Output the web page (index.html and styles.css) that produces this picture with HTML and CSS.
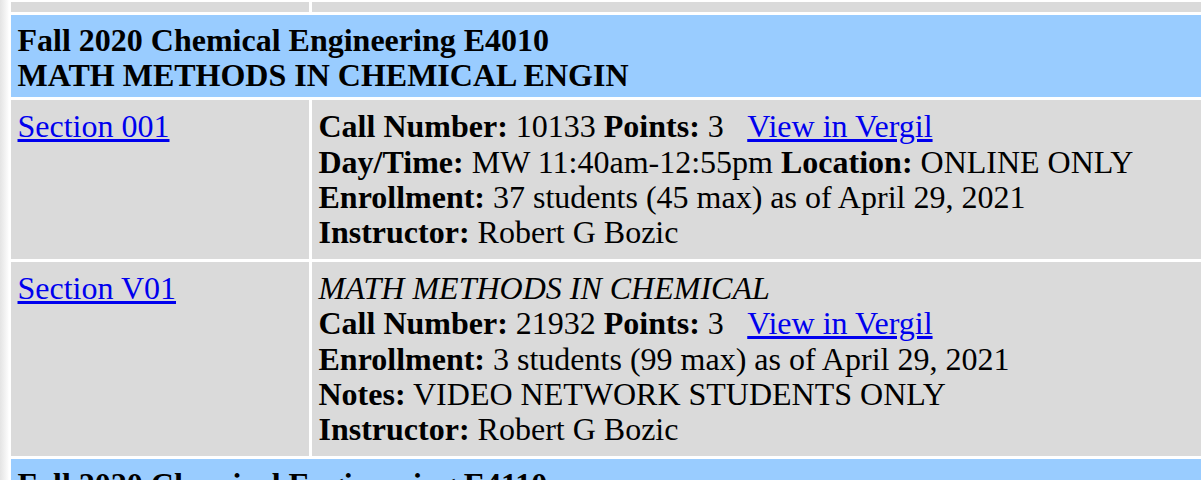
FILE: index.html
```html
<!DOCTYPE html>
<html>
<head>
<meta charset="utf-8">
<link rel="stylesheet" href="styles.css">
</head>
<body>
<table class="courses">
  <colgroup><col class="col-sec"><col class="col-info"></colgroup>
  <tr class="stub"><td></td><td></td></tr>
  <tr>
    <td colspan="2" class="head"><b>Fall 2020 Chemical Engineering E4010<br>MATH METHODS IN CHEMICAL ENGIN</b></td>
  </tr>
  <tr>
    <td class="sec"><a href="#">Section 001</a></td>
    <td class="info"><b>Call Number:</b> 10133 <b>Points:</b> 3&nbsp;&nbsp; <a href="#">View in Vergil</a><br>
      <b>Day/Time:</b> MW 11:40am-12:55pm <b>Location:</b> ONLINE ONLY<br>
      <b>Enrollment:</b> 37 students (45 max) as of April 29, 2021<br>
      <b>Instructor:</b> Robert G Bozic</td>
  </tr>
  <tr>
    <td class="sec"><a href="#">Section V01</a></td>
    <td class="info"><i>MATH METHODS IN CHEMICAL</i><br>
      <b>Call Number:</b> 21932 <b>Points:</b> 3&nbsp;&nbsp; <a href="#">View in Vergil</a><br>
      <b>Enrollment:</b> 3 students (99 max) as of April 29, 2021<br>
      <b>Notes:</b> VIDEO NETWORK STUDENTS ONLY<br>
      <b>Instructor:</b> Robert G Bozic</td>
  </tr>
  <tr>
    <td colspan="2" class="head"><b>Fall 2020 Chemical Engineering E4110<br>TRANSPORT PHENOMENA</b></td>
  </tr>
</table>
</body>
</html>
```

FILE: styles.css
```css
html {
  overflow: hidden;
  background: #fff linear-gradient(to right, #e4e4e4 0, #efefef 4px, #fbfbfb 8px, #fff 9px) no-repeat;
  background-size: 10px 100%;
}
body {
  margin: 0 0 0 7.5px;
  font-family: "Liberation Serif", "Times New Roman", serif;
  font-size: 32px;
  color: #000;
}
.courses {
  width: 1220px;
  border-collapse: separate;
  border-spacing: 3.5px;
  table-layout: fixed;
  margin-top: -1.5px;
}
.col-sec { width: 298px; }
.courses td {
  background: #dadada;
  padding: 9px 7px 8px;
  vertical-align: top;
  line-height: 35.4px;
}
.courses .stub td {
  height: 10.2px;
  padding: 0;
}
.courses td.head {
  background: #99ccff;
  padding: 8px 7px 4.5px;
  line-height: 35px;
}
a { color: #0000ee; text-decoration: underline; }
```
